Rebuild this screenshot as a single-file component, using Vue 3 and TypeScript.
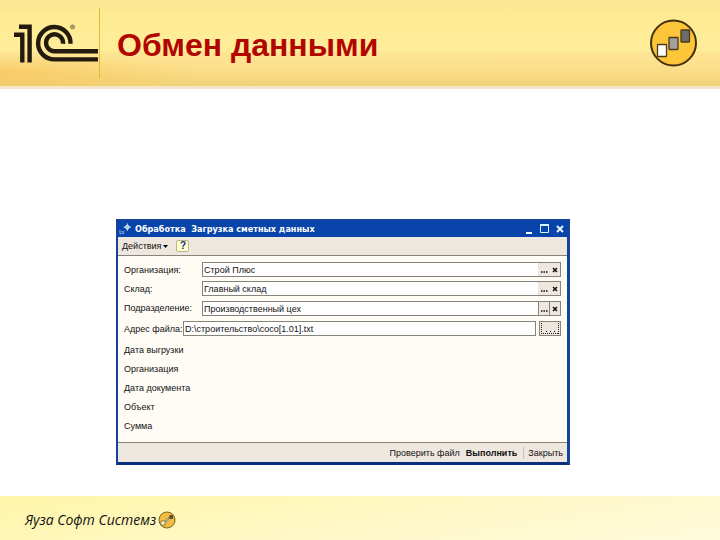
<script setup lang="ts">
interface LookupField {
  id: string
  label: string
  value: string
  boxed: boolean
}

const lookups: LookupField[] = [
  { id: 'organization', label: 'Организация:', value: 'Строй Плюс', boxed: false },
  { id: 'warehouse', label: 'Склад:', value: 'Главный склад', boxed: false },
  { id: 'department', label: 'Подразделение:', value: 'Производственный цех', boxed: true },
]

const details: string[] = ['Дата выгрузки', 'Организация', 'Дата документа', 'Объект', 'Сумма']
</script>

<template>
  <div class="slide">
    <header class="banner">
      <svg class="logo" viewBox="0 0 88 44" aria-label="1C">
        <g fill="none" stroke="#241a0e" stroke-width="4.400">
          <path d="M5 5.700H15.600V41.500" />
          <path d="M0 13.700H8.300V41.500" />
          <path d="M56.500 22.700A16.200 16.200 0 1 0 40.300 38.400H84" />
          <path d="M49 22.700A8.500 8.500 0 1 0 40.300 30.300H84" />
        </g>
        <circle cx="58.500" cy="6" r="2" fill="none" stroke="#5b4a22" stroke-width="0.700" />
        <path d="M58 7V5H59L58.800 6L59.500 7" fill="none" stroke="#5b4a22" stroke-width="0.600" />
      </svg>
      <h1 class="title">Обмен данными</h1>
      <svg class="badge" viewBox="0 0 48 48" aria-hidden="true">
        <circle cx="24.500" cy="24" r="22.500" fill="#fcc638" stroke="#432f0c" stroke-width="2" />
        <g stroke="#4b3b1a" stroke-width="1.300">
          <rect x="8.500" y="25.500" width="9" height="12" rx="0.500" fill="#fff" />
          <rect x="20" y="18.500" width="9" height="12" rx="0.500" fill="#a3a09c" />
          <rect x="32" y="11" width="8.500" height="12" rx="0.500" fill="#6d6b67" />
        </g>
      </svg>
    </header>

    <main class="stage">
      <section class="window">
        <div class="titlebar">
          <svg class="app-icon" viewBox="0 0 13 12" aria-hidden="true">
            <path d="M1 7V11H5V8" fill="none" stroke="#87b4e8" />
            <path d="M2 9H4" stroke="#d0a878" />
            <circle cx="9" cy="4" r="2" fill="#9fc8d8" stroke="#e8f8ff" />
            <path d="M9 0V2M9 6V8M5 4H7M11 4H13" stroke="#d6f4ff" />
          </svg>
          <h2 class="caption">Обработка&nbsp; Загрузка сметных данных</h2>
          <div class="controls">
            <button type="button" class="control" aria-label="Свернуть">
              <svg viewBox="0 0 10 10"><path d="M3 9H9" stroke="#eaffff" stroke-width="2" /></svg>
            </button>
            <button type="button" class="control" aria-label="Развернуть">
              <svg viewBox="0 0 10 10">
                <path d="M1.500 1V8.500H9.500V1" fill="none" stroke="#d8f6ff" />
                <path d="M1 1H10" stroke="#d8f6ff" stroke-width="2" />
              </svg>
            </button>
            <button type="button" class="control" aria-label="Закрыть окно">
              <svg viewBox="0 0 10 10"><path d="M2 2L8 8M8 2L2 8" stroke="#eaffff" stroke-width="1.800" /></svg>
            </button>
          </div>
        </div>

        <div class="toolbar">
          <button type="button" class="menu">
            Действия
            <svg class="arrow" viewBox="0 0 5 3" aria-hidden="true"><path d="M0 0H5L2.500 3Z" /></svg>
          </button>
          <button type="button" class="help">?</button>
        </div>

        <form class="form" @submit.prevent>
          <div v-for="field in lookups" :key="field.id" class="row">
            <label class="label" :for="field.id">{{ field.label }}</label>
            <div class="lookup" :class="{ boxed: field.boxed }">
              <input :id="field.id" class="input" type="text" :value="field.value" />
              <button type="button" class="pick" aria-label="Выбрать">
                <svg viewBox="0 0 8 8"><path d="M1 6H2.500M3.500 6H5M6 6H7.500" stroke="#111" stroke-width="1.300" /></svg>
              </button>
              <button type="button" class="pick clear" aria-label="Очистить">
                <svg viewBox="0 0 8 8"><path d="M2 2L6 6M6 2L2 6" stroke="#111" stroke-width="1.500" /></svg>
              </button>
            </div>
          </div>
          <div class="row file">
            <label class="label" for="file">Адрес файла:</label>
            <input id="file" class="input path" type="text" value="D:\строительство\сосо[1.01].txt" />
            <button type="button" class="browse" aria-label="Обзор">
              <svg viewBox="0 0 18 11">
                <path d="M0.500 0V11M17.500 0V11M0 10.500H18" fill="none" stroke="#222" stroke-dasharray="1 1" />
                <path d="M5 8.500H6M9 8.500H10M13 8.500H14" stroke="#111" />
              </svg>
            </button>
          </div>
          <ul class="details">
            <li v-for="detail in details" :key="detail">{{ detail }}</li>
          </ul>
        </form>

        <div class="actions">
          <button type="button" class="action">Проверить файл</button>
          <button type="button" class="action primary">Выполнить</button>
          <button type="button" class="action last">Закрыть</button>
        </div>
      </section>
    </main>

    <footer class="footer">
      <span class="company">Яуза Софт Системз</span>
      <svg class="mini" viewBox="0 0 18 18" aria-hidden="true">
        <circle cx="9" cy="9" r="8" fill="#f4bd3c" stroke="#7a6326" />
        <path d="M6 12L12 6" stroke="#8b8468" stroke-width="2" />
        <rect x="3" y="10" width="4" height="4" fill="#fff8d0" stroke="#77703e" stroke-width="0.800" />
        <rect x="7.500" y="7" width="3" height="4" fill="#b5a98a" />
        <rect x="11.500" y="4" width="3.500" height="4" fill="#55543a" />
      </svg>
    </footer>
  </div>
</template>

<style>
body {
  margin: 0;
}
</style>

<style scoped>
.slide {
  display: flex;
  flex-direction: column;
  min-height: 100vh;
  background: #fff;
  font-family: "Liberation Sans", Arial, sans-serif;
  color: #111;
}

.banner {
  display: flex;
  align-items: center;
  box-sizing: border-box;
  height: 89px;
  padding: 2px 23px 2px 14px;
  border-bottom: 3px solid #f3e6cb;
  background:
    radial-gradient(ellipse at 0 85%, rgba(248, 178, 55, 0.4), rgba(248, 190, 80, 0) 200px),
    linear-gradient(#fae593 0, #fdeb94 20%, #ffed9a 59%, #fde595 61%, #fbdf8b 80%, #f2d276 100%);
}

.logo {
  flex: none;
  width: 88px;
  height: 44px;
}

.title {
  margin: 0 0 0 -3px;
  padding: 16px 0 12px 17px;
  border-left: 1px solid #dfbd2e;
  font-size: 32px;
  line-height: 42px;
  font-weight: bold;
  color: #b30500;
}

.badge {
  width: 48px;
  height: 48px;
  margin-left: auto;
}

.stage {
  flex: 1;
  padding: 130px 150px 31px 116px;
}

.window {
  border: 2px solid #15439c;
  border-right-width: 3px;
  border-bottom: 3px solid #092f7d;
  background: #fffcf6;
  font-size: 9px;
  line-height: 12px;
}

button {
  padding: 0;
  border: 0;
  background: none;
  color: inherit;
  font: inherit;
}

.titlebar {
  display: flex;
  align-items: center;
  gap: 4px;
  height: 16px;
  padding: 0 2px 0 1px;
  background: #0844aa;
  color: #fff;
}

.app-icon {
  width: 12px;
  height: 12px;
}

.caption {
  margin: 0;
  font-family: "DejaVu Sans Condensed", "DejaVu Sans", sans-serif;
  font-size: 9px;
  line-height: 16px;
  font-weight: bold;
}

.controls {
  display: flex;
  gap: 6px;
  margin-left: auto;
}

.control {
  display: flex;
}

.control svg {
  width: 10px;
  height: 10px;
}

.toolbar {
  display: flex;
  align-items: center;
  gap: 8px;
  height: 18px;
  padding-left: 4px;
  border-bottom: 1px solid #888378;
  background: #eee7e0;
}

.menu {
  display: flex;
  align-items: center;
  gap: 2px;
}

.arrow {
  width: 5px;
  height: 3px;
}

.help {
  width: 13px;
  height: 12px;
  border: 1px solid #b9b783;
  border-radius: 2px;
  background: #ffffcf;
  color: #123078;
  font-size: 10px;
  line-height: 10px;
  font-weight: bold;
}

.form {
  display: flex;
  flex-direction: column;
  gap: 4px;
  padding: 6px 6px 10px;
}

.row {
  display: flex;
  align-items: center;
}

.label {
  width: 78px;
  white-space: nowrap;
}

.lookup {
  display: flex;
  flex: 1;
  box-sizing: border-box;
  height: 15px;
  border: 1px solid #888378;
  background: #eee7e0;
}

.input {
  flex: 1;
  box-sizing: border-box;
  min-width: 0;
  padding: 0 1px;
  border: 0;
  background: #fff;
  color: inherit;
  font: inherit;
  outline: 0;
}

.pick {
  display: flex;
  align-items: center;
  justify-content: center;
  width: 11px;
}

.pick svg {
  width: 8px;
  height: 8px;
}

.boxed .pick {
  border-left: 1px solid #888378;
}

.boxed {
  margin-top: 1px;
}

.file {
  margin-top: 1px;
}

.file .label {
  width: 59px;
}

.path {
  height: 15px;
  border: 1px solid #888378;
}

.browse {
  display: flex;
  align-items: center;
  justify-content: center;
  box-sizing: border-box;
  width: 22px;
  height: 15px;
  margin-left: 3px;
  border: 1px solid #888378;
  background: #eee7e0;
}

.browse svg {
  width: 18px;
  height: 11px;
}

.details {
  display: flex;
  flex-direction: column;
  gap: 7px;
  margin: 4px 0 0;
  padding: 0;
  list-style: none;
}

.actions {
  display: flex;
  align-items: center;
  justify-content: flex-end;
  gap: 6px;
  height: 19px;
  padding-right: 4px;
  border-top: 1px solid #888378;
  background: #eee7e0;
}

.primary {
  font-weight: bold;
}

.last {
  padding-left: 4px;
  border-left: 1px solid #c9c1b5;
}

.footer {
  display: flex;
  align-items: center;
  gap: 2px;
  box-sizing: border-box;
  height: 44px;
  padding: 4px 25px 0;
  background: linear-gradient(170deg, #fff5a8 0, #fff8c2 45%, #fffadc 100%);
}

.company {
  font-family: "Open Sans", "Noto Sans", sans-serif;
  font-size: 14px;
  line-height: 18px;
  font-weight: 500;
  font-style: italic;
}

.mini {
  width: 18px;
  height: 18px;
}
</style>
